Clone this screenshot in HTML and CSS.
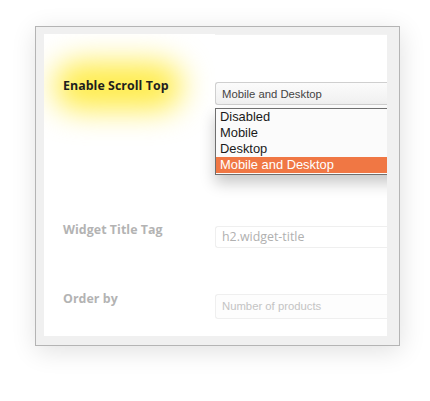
FILE: index.html
```html
<!DOCTYPE html>
<html>
<head>
<meta charset="utf-8">
<link rel="stylesheet" href="styles.css">
</head>
<body>
<div class="stage">
  <div class="frame">
    <div class="panel">
      <div class="row row-main">
        <div class="label-cell">
          <span class="glow"></span>
          <span class="label label-active">Enable Scroll Top</span>
        </div>
        <div class="field-cell">
          <div class="select">Mobile and Desktop</div>
          <ul class="options">
            <li>Disabled</li>
            <li>Mobile</li>
            <li>Desktop</li>
            <li class="selected">Mobile and Desktop</li>
          </ul>
        </div>
      </div>
      <div class="row row-title">
        <div class="label-cell"><span class="label">Widget Title Tag</span></div>
        <div class="field-cell"><div class="input input-title">h2.widget-title</div></div>
      </div>
      <div class="row row-order">
        <div class="label-cell"><span class="label">Order by</span></div>
        <div class="field-cell"><div class="input input-order">Number of products</div></div>
      </div>
    </div>
  </div>
</div>
</body>
</html>
```

FILE: styles.css
```css
html, body {
  margin: 0;
  padding: 0;
  background: #ffffff;
  width: 430px;
  height: 401px;
  overflow: hidden;
}

.stage {
  padding: 26px 0 0 35px;
}

.frame {
  width: 349px;
  height: 302px;
  border: 1px solid #b4b4b4;
  background: #f0f0f0;
  padding: 7px 6px 9px 8px;
  box-shadow: 1px 5px 24px rgba(0, 0, 0, 0.12);
}

.panel {
  width: 343px;
  height: 302px;
  background: #ffffff;
  overflow: hidden;
  position: relative;
  display: flex;
  flex-direction: column;
}

.row {
  display: grid;
  grid-template-columns: 171px 1fr;
}

.label-cell {
  position: relative;
  padding-left: 19px;
}

.field-cell {
  position: relative;
}

.label {
  position: relative;
  font-family: "Open Sans", "Noto Sans", sans-serif;
  font-weight: 700;
  font-size: 12.4px;
  line-height: 16px;
  color: #b3b3b3;
  letter-spacing: 0.05px;
}

.label-active {
  color: #1e1e1e;
}

.glow {
  position: absolute;
  left: 10px;
  top: 28px;
  width: 128px;
  height: 48px;
  border-radius: 24px;
  background: #ffec4a;
  filter: blur(15px);
}

.row-main {
  height: 160px;
}

.row-main .label-cell {
  padding-top: 42px;
}

.row-main .field-cell {
  padding-top: 47px;
  border-top: 2px solid #f2f2f2;
  margin-top: -1px;
}

.select {
  height: 23px;
  box-sizing: border-box;
  border: 1px solid #cfcfcf;
  border-right: 0;
  border-radius: 3px 0 0 3px;
  background: linear-gradient(#fbfbfb, #f0f0f0);
  font-family: "Liberation Sans", Arial, sans-serif;
  font-size: 11.3px;
  line-height: 22px;
  color: #444444;
  padding-left: 6px;
  width: 200px;
}

.options {
  position: absolute;
  left: 0;
  top: 73px;
  width: 200px;
  margin: 0;
  padding: 0 0 1px 0;
  list-style: none;
  border: 1px solid #6f6f6f;
  border-right: 0;
  background: #fbfbfb;
  box-shadow: 0 8px 14px rgba(0, 0, 0, 0.22);
  font-family: "Liberation Sans", Arial, sans-serif;
  font-size: 12.9px;
  line-height: 16px;
  color: #1a1a1a;
}

.options li {
  padding-left: 4px;
  height: 16px;
  white-space: nowrap;
}

.options li.selected {
  background: #f07744;
  color: #ffffff;
}

.row-title {
  height: 68px;
}

.row-title .label-cell {
  padding-top: 26px;
}

.row-title .field-cell {
  padding-top: 32px;
}

.input {
  box-sizing: border-box;
  border: 1px solid #efefef;
  border-right: 0;
  border-radius: 3px 0 0 3px;
  background: #ffffff;
  padding-left: 6px;
  width: 200px;
  white-space: nowrap;
}

.input-title {
  height: 22px;
  font-family: "Open Sans", "Noto Sans", sans-serif;
  font-size: 12.4px;
  line-height: 20px;
  color: #b0b0b0;
}

.row-order .label-cell {
  padding-top: 27px;
}

.row-order .field-cell {
  padding-top: 32px;
}

.input-order {
  height: 25px;
  font-family: "Liberation Sans", Arial, sans-serif;
  font-size: 11.3px;
  line-height: 23px;
  color: #c4c4c4;
  background: #fdfdfd;
}
```
